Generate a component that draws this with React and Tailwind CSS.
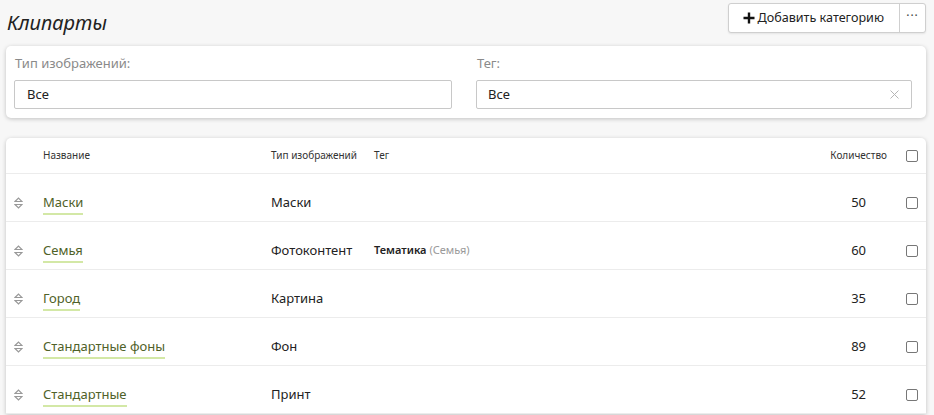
import React from "react";

const rows = [
  { name: "Маски", type: "Маски", tag: null, count: 50 },
  { name: "Семья", type: "Фотоконтент", tag: { main: "Тематика", sub: "(Семья)" }, count: 60 },
  { name: "Город", type: "Картина", tag: null, count: 35 },
  { name: "Стандартные фоны", type: "Фон", tag: null, count: 89 },
  { name: "Стандартные", type: "Принт", tag: null, count: 52 },
];

const DragIcon = () => (
  <svg width="9" height="14" viewBox="0 0 9 14" fill="none" stroke="#999" strokeWidth="1.2">
    <path d="M1 5.5 L4.5 2 L8 5.5 Z" />
    <path d="M1 8.5 L4.5 12 L8 8.5 Z" />
  </svg>
);

const Checkbox = () => (
  <span className="block w-[12px] h-[12px] border border-[#777] rounded-[2px] bg-white" />
);

const App = () => {
  return (
    <div
      className="w-[934px] h-[415px] overflow-hidden bg-[#f7f7f7] text-[#222]"
      style={{ fontFamily: '"Noto Sans", "Open Sans", sans-serif' }}
    >
      <div className="flex items-start justify-between pl-[7px] pr-[8px] pt-[3px] h-[46px]">
        <h1 className="italic text-[20px] leading-[24px] mt-[8px] text-[#222]">Клипарты</h1>
        <div className="flex h-[30px] bg-white border border-[#cfcfcf] rounded-[3px] shadow-[0_1px_2px_rgba(0,0,0,0.08)]">
          <button type="button" className="flex items-center gap-[3px] pl-[14px] pr-[15px] text-[12.6px] text-[#222]">
            <svg width="12" height="12" viewBox="0 0 12 12">
              <path d="M6 0.5 V11.5 M0.5 6 H11.5" stroke="#111" strokeWidth="2.4" />
            </svg>
            Добавить категорию
          </button>
          <button type="button" className="w-[26px] border-l border-[#cfcfcf] text-[12px] text-[#444] tracking-[1px] leading-none pb-[4px]">
            ···
          </button>
        </div>
      </div>

      <div className="mx-[6px] w-[920px] h-[72px] bg-white rounded-[5px] shadow-[0_1px_4px_rgba(0,0,0,0.22)] px-[8px] pt-[8px] grid grid-cols-[438px_436px] gap-x-[24px]">
        <div>
          <div className="text-[13px] text-[#8a8a8a] pl-[1px] h-[26px] leading-[18px]">Тип изображений:</div>
          <div className="h-[29px] border border-[#c8c8c8] rounded-[2px] flex items-center pl-[12px] text-[13px] text-[#222]">Все</div>
        </div>
        <div>
          <div className="text-[13px] text-[#8a8a8a] pl-[1px] h-[26px] leading-[18px]">Тег:</div>
          <div className="h-[29px] border border-[#c8c8c8] rounded-[2px] flex items-center justify-between pl-[11px] pr-[12px] text-[13px] text-[#222]">
            <span>Все</span>
            <svg width="9" height="9" viewBox="0 0 9 9" stroke="#b5b5b5" strokeWidth="1">
              <path d="M0.5 0.5 L8.5 8.5 M8.5 0.5 L0.5 8.5" />
            </svg>
          </div>
        </div>
      </div>

      <div className="mx-[6px] mt-[20px] w-[920px] bg-white rounded-t-[5px] shadow-[0_1px_4px_rgba(0,0,0,0.22)]">
        <div className="grid grid-cols-[37px_228px_103px_1fr_100px_39px] items-center h-[36px] border-b border-[#ececec] text-[10px] text-[#333]">
          <div />
          <div>Название</div>
          <div>Тип изображений</div>
          <div>Тег</div>
          <div className="text-right">Количество</div>
          <div className="pl-[19px]"><Checkbox /></div>
        </div>
        {rows.map((row, k) => (
          <div
            key={k}
            className="grid grid-cols-[37px_228px_103px_1fr_100px_39px] items-center h-[48px] pt-[10px] border-b border-[#ececec] text-[13px]"
          >
            <div className="flex pl-[8px]"><DragIcon /></div>
            <div>
              <span className="text-[#4f6128] border-b-2 border-[#d3e8a6] pb-[2px]">{row.name}</span>
            </div>
            <div className="text-[#222]">{row.type}</div>
            <div className="text-[11px]">
              {row.tag && (
                <>
                  <span className="font-semibold text-[#222]">{row.tag.main}</span>{" "}
                  <span className="text-[#9a9a9a]">{row.tag.sub}</span>
                </>
              )}
            </div>
            <div className="text-right pr-[21px] text-[#222]">{row.count}</div>
            <div className="pl-[19px]"><Checkbox /></div>
          </div>
        ))}
      </div>
    </div>
  );
};

export default App;
